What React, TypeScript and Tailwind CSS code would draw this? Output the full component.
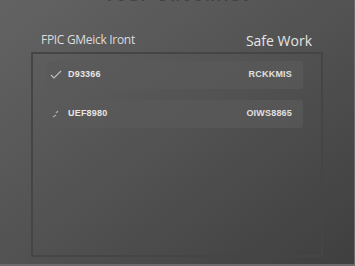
import React from 'react';

const rows = [
  { id: 1, icon: 'check', left: 'D93366', right: 'RCKKMIS' },
  { id: 2, icon: 'chevron', left: 'UEF8980', right: 'OIWS8865' },
];

export default function App() {
  return (
    <div className="relative w-[355px] h-[266px] overflow-hidden bg-gradient-to-br from-[#636363] via-[#525252] to-[#3f3f3f] font-['Liberation_Sans',sans-serif]">
      {/* Cut-off page title */}
      <h1 className="-mt-[11px] h-[14px] text-center text-[15px] font-bold tracking-[3px] text-[#424242] leading-[14px]">
        Your Checklist
      </h1>

      {/* Header */}
      <div className="flex items-center justify-between pl-[41px] pr-[43px] mt-[29px] h-[16px]">
        <span className="text-[12px] text-[#dcdcdc] font-['Open_Sans',sans-serif] tracking-[-0.3px]">FPIC GMeick Iront</span>
        <span className="text-[14px] text-[#e4e4e4] font-['Open_Sans',sans-serif]">Safe Work</span>
      </div>

      {/* Panel */}
      <div className="ml-[31px] mt-[4px] w-[292px] h-[205px] border-2 border-[#454545] rounded-[1px] pl-[14px] pr-[18px] pt-[7px] flex flex-col gap-[11px]">
        {rows.map((row) => (
          <div
            key={row.id}
            className="flex items-center justify-between h-[28px] bg-[#5a5a5a]/70 rounded-[3px] pl-[3px] pr-[11px]"
          >
            <div className="flex items-center gap-[6px]">
              {row.icon === 'check' ? (
                <svg width="12" height="10" viewBox="0 0 12 10" fill="none" stroke="#bdbdbd" strokeWidth="1.2">
                  <path d="M1 5 L4 8 L11 1" />
                </svg>
              ) : (
                <svg width="12" height="10" viewBox="0 0 12 10" fill="none" stroke="#a8a8a8" strokeWidth="1.2">
                  <path d="M3 8 L6 6 M6 4 L8 2" />
                </svg>
              )}
              <span className="text-[9px] text-[#e6e6e6] font-bold tracking-[0.2px]">{row.left}</span>
            </div>
            <span className="text-[9px] text-[#e0e0e0] font-bold tracking-[0.2px]">{row.right}</span>
          </div>
        ))}
      </div>

      <div className="absolute left-0 right-0 bottom-0 h-[2px] bg-[#6a6a6a]" />
      <div className="absolute top-0 bottom-0 right-0 w-[1px] bg-[#6a6a6a]" />
    </div>
  );
}
